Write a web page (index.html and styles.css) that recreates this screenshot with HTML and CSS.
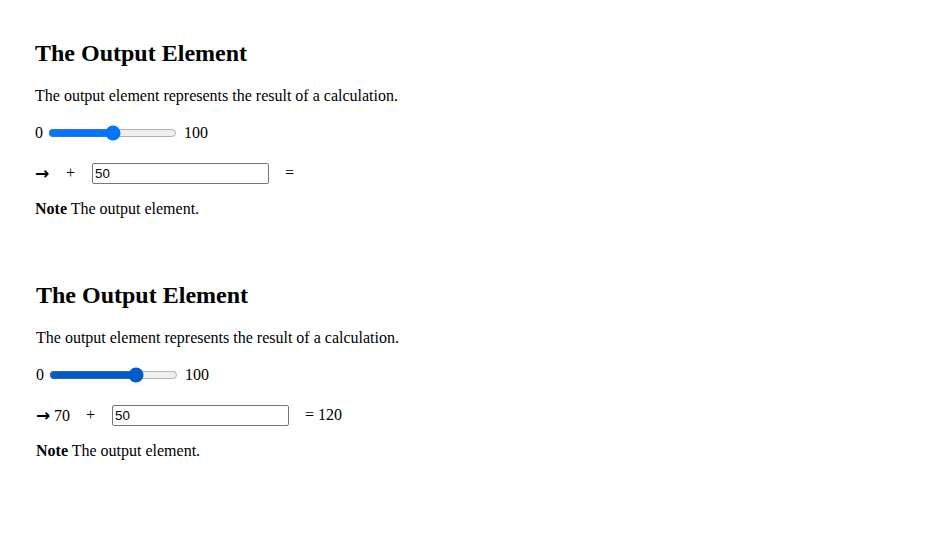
FILE: index.html
```html
<!DOCTYPE html>
<html>
<head>
<meta charset="utf-8">
<link rel="stylesheet" href="styles.css">
</head>
<body>
<section class="demo demo-one">
  <h2 class="title">The Output Element</h2>
  <p class="text">The output element represents the result of a calculation.</p>
  <div class="row slider-row">
    <span>0</span>
    <input class="range" type="range" min="0" max="100" value="50">
    <span>100</span>
  </div>
  <div class="row calc-row">
    <span class="result"><span class="arrow">&rarr;</span></span>
    <span class="plus">+</span>
    <input class="num" type="text" value="50">
    <span class="equals">=</span>
  </div>
  <p class="text"><b>Note</b> The output element.</p>
</section>
<section class="demo demo-two">
  <h2 class="title">The Output Element</h2>
  <p class="text">The output element represents the result of a calculation.</p>
  <div class="row slider-row">
    <span>0</span>
    <input class="range range-dark" type="range" min="0" max="100" value="70">
    <span>100</span>
  </div>
  <div class="row calc-row">
    <span class="result"><span class="arrow">&rarr;</span> 70</span>
    <span class="plus">+</span>
    <input class="num" type="text" value="50">
    <span class="equals">= 120</span>
  </div>
  <p class="text"><b>Note</b> The output element.</p>
</section>
</body>
</html>
```
FILE: styles.css
```css
html, body {
  margin: 0;
  padding: 0;
  background: #fff;
}
body {
  font-family: "Liberation Serif", "Times New Roman", serif;
  font-size: 16px;
  color: #000;
}
.demo {
  padding: 20px 35px 0;
}
.demo-one {
  padding-bottom: 8px;
}
.demo-two {
  padding-left: 36px;
}
.title {
  font-size: 24px;
  font-weight: bold;
  margin: 20px 0;
}
.text {
  margin: 16px 0;
}
.row {
  display: flex;
  align-items: center;
  margin: 16px 0;
}
.range {
  width: 129px;
  margin: 4px 7px 4px 5px;
  accent-color: #0075ff;
}
.range-dark {
  accent-color: #005cc8;
}
.calc-row {
  height: 22px;
  margin-top: 17px;
  margin-bottom: 15px;
}
.arrow {
  display: inline-block;
  width: 14px;
  font-family: "DejaVu Sans", sans-serif;
  font-weight: bold;
  font-size: 17px;
}
.plus {
  margin-left: 17px;
}
.demo-two .plus {
  margin-left: 16px;
}
.num {
  margin: 0 0 0 17px;
  width: 177px;
  font-family: "Liberation Sans", Arial, sans-serif;
  font-size: 13.33px;
  padding: 1px 2px;
  border: 1px solid #767676;
  border-radius: 2px;
  height: 21px;
  box-sizing: border-box;
}
.equals {
  margin-left: 16px;
}
```
